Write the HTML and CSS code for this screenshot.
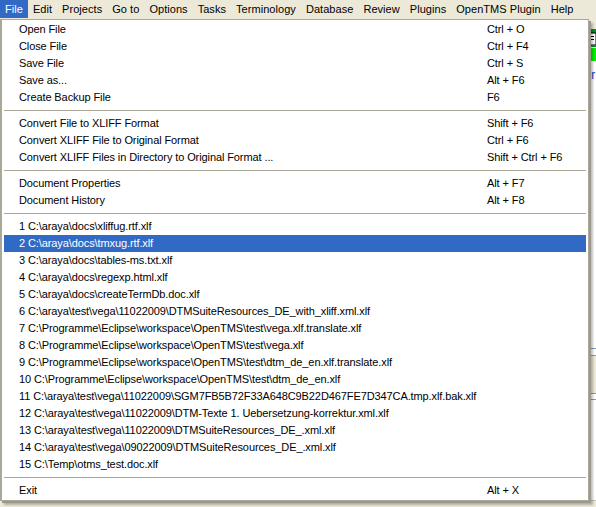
FILE: index.html
```html
<!DOCTYPE html>
<html>
<head>
<meta charset="utf-8">
<link rel="stylesheet" href="styles.css">
</head>
<body>
<div class="app">
  <nav class="menubar">
    <span class="mitem active">File</span>
    <span class="mitem">Edit</span>
    <span class="mitem">Projects</span>
    <span class="mitem">Go to</span>
    <span class="mitem">Options</span>
    <span class="mitem">Tasks</span>
    <span class="mitem">Terminology</span>
    <span class="mitem">Database</span>
    <span class="mitem">Review</span>
    <span class="mitem">Plugins</span>
    <span class="mitem">OpenTMS Plugin</span>
    <span class="mitem">Help</span>
  </nav>
  <div class="workspace">
    <div class="toolbar">
      <svg class="tool-icon" width="12" height="18" viewBox="0 0 12 18">
        <rect x="0" y="0" width="12" height="4" fill="#0a8a2a"/>
        <rect x="0" y="4" width="12" height="12" fill="#ffffff" stroke="#000" stroke-width="1"/>
        <rect x="2" y="7" width="8" height="1" fill="#000"/>
        <rect x="2" y="10" width="8" height="1" fill="#000"/>
        <rect x="0" y="16" width="12" height="2" fill="#0a8a2a"/>
      </svg>
    </div>
    <div class="panel">
      <div class="cell green">yl</div>
      <div class="cell link">hir</div>
    </div>
    <div class="tabband"></div>
    <div class="lower"></div>
    <div class="statusbar"></div>
  </div>

  <div class="dropdown">
    <div class="row"><span>Open File</span><span>Ctrl + O</span></div>
    <div class="row"><span>Close File</span><span>Ctrl + F4</span></div>
    <div class="row"><span>Save File</span><span>Ctrl + S</span></div>
    <div class="row"><span>Save as...</span><span>Alt + F6</span></div>
    <div class="row"><span>Create Backup File</span><span>F6</span></div>
    <div class="sep"></div>
    <div class="row"><span>Convert File to XLIFF Format</span><span>Shift + F6</span></div>
    <div class="row"><span>Convert XLIFF File to Original Format</span><span>Ctrl + F6</span></div>
    <div class="row"><span>Convert XLIFF Files in Directory to Original Format ...</span><span>Shift + Ctrl + F6</span></div>
    <div class="sep"></div>
    <div class="row"><span>Document Properties</span><span>Alt + F7</span></div>
    <div class="row"><span>Document History</span><span>Alt + F8</span></div>
    <div class="sep"></div>
    <div class="row"><span>1 C:\araya\docs\xliffug.rtf.xlf</span><span></span></div>
    <div class="row selected"><span>2 C:\araya\docs\tmxug.rtf.xlf</span><span></span></div>
    <div class="row"><span>3 C:\araya\docs\tables-ms.txt.xlf</span><span></span></div>
    <div class="row"><span>4 C:\araya\docs\regexp.html.xlf</span><span></span></div>
    <div class="row"><span>5 C:\araya\docs\createTermDb.doc.xlf</span><span></span></div>
    <div class="row"><span>6 C:\araya\test\vega\11022009\DTMSuiteResources_DE_with_xliff.xml.xlf</span><span></span></div>
    <div class="row"><span>7 C:\Programme\Eclipse\workspace\OpenTMS\test\vega.xlf.translate.xlf</span><span></span></div>
    <div class="row"><span>8 C:\Programme\Eclipse\workspace\OpenTMS\test\vega.xlf</span><span></span></div>
    <div class="row"><span>9 C:\Programme\Eclipse\workspace\OpenTMS\test\dtm_de_en.xlf.translate.xlf</span><span></span></div>
    <div class="row"><span>10 C:\Programme\Eclipse\workspace\OpenTMS\test\dtm_de_en.xlf</span><span></span></div>
    <div class="row"><span>11 C:\araya\test\vega\11022009\SGM7FB5B72F33A648C9B22D467FE7D347CA.tmp.xlf.bak.xlf</span><span></span></div>
    <div class="row"><span>12 C:\araya\test\vega\11022009\DTM-Texte 1. Uebersetzung-korrektur.xml.xlf</span><span></span></div>
    <div class="row"><span>13 C:\araya\test\vega\11022009\DTMSuiteResources_DE_.xml.xlf</span><span></span></div>
    <div class="row"><span>14 C:\araya\test\vega\09022009\DTMSuiteResources_DE_.xml.xlf</span><span></span></div>
    <div class="row"><span>15 C:\Temp\otms_test.doc.xlf</span><span></span></div>
    <div class="sep"></div>
    <div class="row"><span>Exit</span><span>Alt + X</span></div>
  </div>
</div>
</body>
</html>
```

FILE: styles.css
```css
html, body {
  margin: 0;
  padding: 0;
}
body {
  width: 596px;
  height: 507px;
  overflow: hidden;
  background: #ffffff;
  font-family: "Liberation Sans", Arial, sans-serif;
  font-size: 11px;
  color: #000;
}
.app {
  position: relative;
  width: 596px;
  height: 507px;
  overflow: hidden;
  display: flex;
  flex-direction: column;
}
.menubar {
  height: 19px;
  background: #ECE9D8;
  display: flex;
  align-items: flex-start;
  flex: none;
}
.mitem {
  height: 18px;
  line-height: 18px;
  padding: 0 5px 0 5px;
  letter-spacing: 0.05px;
  white-space: nowrap;
}
.mitem.active {
  background: #316AC5;
  color: #fff;
}
.workspace {
  flex: 1;
  display: flex;
  flex-direction: column;
  background: #fff;
}
.toolbar {
  height: 28px;
  background: #ECE9D8;
  display: flex;
  justify-content: flex-end;
  align-items: flex-end;
}
.panel {
  display: flex;
  flex-direction: column;
  align-items: flex-end;
  padding-top: 1px;
}
.cell {
  height: 13px;
  line-height: 13px;
  font-size: 12px;
  width: 14px;
  overflow: hidden;
  white-space: nowrap;
}
.cell.green {
  background: #00F000;
  color: #000;
}
.cell.link {
  margin-top: 8px;
  color: #1040D0;
  background: #fff;
}
.tabband {
  margin-top: 266px;
  height: 50px;
  border-top: 1px solid #7F9DB9;
  border-bottom: 1px solid #7F9DB9;
  background: #fff;
  display: flex;
  flex-direction: column;
  justify-content: center;
}
.tabband::before {
  content: "";
  display: block;
  height: 37px;
  border-top: 1px solid #7F9DB9;
  border-bottom: 1px solid #7F9DB9;
  background: #ECE9D8;
}
.lower {
  flex: 1;
  background: #fff;
}
.statusbar {
  height: 6px;
  background: #ECE9D8;
  border-top: 1px solid #C8C6BB;
}

.dropdown {
  position: absolute;
  left: 0;
  top: 19px;
  width: 582px;
  padding: 1px 2px;
  background: #fff;
  border: 1px solid #ACA899;
  border-left: 2px solid #ACA899;
  box-shadow: 2px 2px 0 #9A9890, 4px 4px 2px rgba(0,0,0,0.25);
  display: flex;
  flex-direction: column;
}
.row {
  height: 17px;
  line-height: 17px;
  display: grid;
  grid-template-columns: 468px 1fr;
  padding-left: 15px;
  letter-spacing: -0.1px;
  white-space: nowrap;
}
.row.selected {
  background: #316AC5;
  color: #fff;
}
.sep {
  height: 9px;
  display: flex;
  align-items: center;
}
.sep::before {
  content: "";
  display: block;
  flex: 1;
  height: 1px;
  background: #ACA899;
}
```
